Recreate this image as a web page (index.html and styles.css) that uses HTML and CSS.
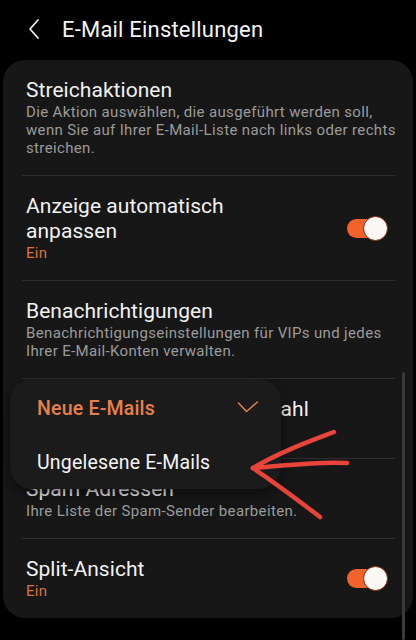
FILE: index.html
```html
<!DOCTYPE html>
<html lang="de">
<head>
<meta charset="utf-8">
<title>E-Mail Einstellungen</title>
<link rel="stylesheet" href="styles.css">
</head>
<body>
<div class="screen">
  <header class="appbar">
    <svg class="back" width="14" height="22" viewBox="0 0 14 22" aria-hidden="true">
      <path d="M11 2 L3 11 L11 20" fill="none" stroke="#eeeeee" stroke-width="1.8" stroke-linecap="round" stroke-linejoin="round"/>
    </svg>
    <h1 class="appbar-title">E-Mail Einstellungen</h1>
  </header>

  <section class="card">
    <div class="row">
      <div class="row-text">
        <div class="row-title">Streichaktionen</div>
        <div class="row-sub">Die Aktion auswählen, die ausgeführt werden soll,<br>wenn Sie auf Ihrer E-Mail-Liste nach links oder rechts<br>streichen.</div>
      </div>
    </div>
    <div class="divider"></div>
    <div class="row">
      <div class="row-text">
        <div class="row-title">Anzeige automatisch<br>anpassen</div>
        <div class="row-value">Ein</div>
      </div>
      <span class="switch on"><span class="knob"></span></span>
    </div>
    <div class="divider"></div>
    <div class="row">
      <div class="row-text">
        <div class="row-title">Benachrichtigungen</div>
        <div class="row-sub">Benachrichtigungseinstellungen für VIPs und jedes<br>Ihrer E-Mail-Konten verwalten.</div>
      </div>
    </div>
    <div class="divider"></div>
    <div class="row">
      <div class="row-text">
        <div class="row-title">Zähler auf App-Symbol Anzahl</div>
        <div class="row-value">Neue E-Mails</div>
      </div>
    </div>
    <div class="divider"></div>
    <div class="row">
      <div class="row-text">
        <div class="row-title">Spam Adressen</div>
        <div class="row-sub">Ihre Liste der Spam-Sender bearbeiten.</div>
      </div>
    </div>
    <div class="divider"></div>
    <div class="row">
      <div class="row-text">
        <div class="row-title">Split-Ansicht</div>
        <div class="row-value">Ein</div>
      </div>
      <span class="switch on"><span class="knob"></span></span>
    </div>
  </section>

  <div class="menu">
    <div class="menu-item selected">
      <span>Neue E-Mails</span>
      <svg class="check" width="24" height="14" viewBox="0 0 24 14" aria-hidden="true">
        <path d="M2.5 3 L10.5 11.5 L21.5 2" fill="none" stroke="#e8804a" stroke-width="1.5" stroke-linecap="round" stroke-linejoin="round"/>
      </svg>
    </div>
    <div class="menu-item">
      <span>Ungelesene E-Mails</span>
    </div>
  </div>

  <div class="scrollbar"></div>

  <svg class="ink" width="416" height="640" viewBox="0 0 416 640" aria-hidden="true">
    <g fill="none" stroke="#e8443a" stroke-width="4.5" stroke-linecap="round" stroke-linejoin="round">
      <path d="M334 432 C308 442 280 452 253 468"/>
      <path d="M347 463 C315 461 285 466 253 468"/>
      <path d="M253 468 C275 483 298 500 320 517"/>
    </g>
  </svg>
</div>
</body>
</html>
```

FILE: styles.css
```css
* { box-sizing: border-box; }

html, body {
  margin: 0;
  padding: 0;
  background: #000;
}

body {
  font-family: Roboto, "Noto Sans", sans-serif;
  color: #f2f2f2;
  -webkit-font-smoothing: antialiased;
}

.screen {
  position: relative;
  width: 416px;
  height: 640px;
  overflow: hidden;
  background: #000;
}

/* top bar */
.appbar {
  height: 60px;
  display: flex;
  align-items: center;
  padding: 0 0 2px 27px;
}

.back {
  flex: none;
  margin-right: 21px;
}

.appbar-title {
  margin: 0;
  font-size: 22px;
  font-weight: 400;
  color: #f4f4f4;
  letter-spacing: 0.2px;
}

/* settings card */
.card {
  margin: 0 3px;
  background: #171717;
  border-radius: 22px;
}

.row {
  display: flex;
  align-items: center;
  padding: 18px 26px 18px 23px;
}

.row-text {
  flex: 1;
  min-width: 0;
}

.row-title {
  font-size: 21px;
  line-height: 25px;
  letter-spacing: 0.05px;
  color: #f2f2f2;
  white-space: nowrap;
}

.row-sub {
  font-size: 15px;
  line-height: 18px;
  letter-spacing: 0.35px;
  color: #9b9b9b;
  white-space: nowrap;
}

.row-value {
  font-size: 15px;
  line-height: 18px;
  letter-spacing: 0.3px;
  color: #d8733e;
}

.divider {
  height: 1px;
  margin: 0 18px 0 19px;
  background: #2e2e2e;
}

/* on/off switch */
.switch {
  position: relative;
  flex: none;
  width: 40px;
  height: 19px;
  border-radius: 10px;
  background: #f2622a;
  margin-left: 12px;
}

.switch .knob {
  position: absolute;
  right: -1px;
  top: -3px;
  width: 25px;
  height: 25px;
  border-radius: 50%;
  background: #fbf8f5;
  border: 1.5px solid #7a2a10;
}

/* popup menu */
.menu {
  position: absolute;
  left: 10px;
  top: 379px;
  width: 271px;
  height: 110px;
  border-radius: 22px;
  background: #1b1b1b;
  box-shadow: 0 4px 14px rgba(0, 0, 0, 0.55);
  padding: 2px 21px 0 27px;
  display: flex;
  flex-direction: column;
}

.menu-item {
  height: 55px;
  display: flex;
  align-items: center;
  justify-content: space-between;
  font-size: 19.5px;
  letter-spacing: 0.2px;
  color: #f4f4f4;
}

.menu-item.selected {
  color: #e8804a;
  font-weight: 500;
}

.check {
  margin-top: -2px;
}

/* scroll indicator */
.scrollbar {
  position: absolute;
  left: 402px;
  top: 372px;
  width: 3px;
  height: 268px;
  border-radius: 2px;
  background: #3a3a3a;
}

/* hand-drawn annotation */
.ink {
  position: absolute;
  left: 0;
  top: 0;
  pointer-events: none;
}
```
